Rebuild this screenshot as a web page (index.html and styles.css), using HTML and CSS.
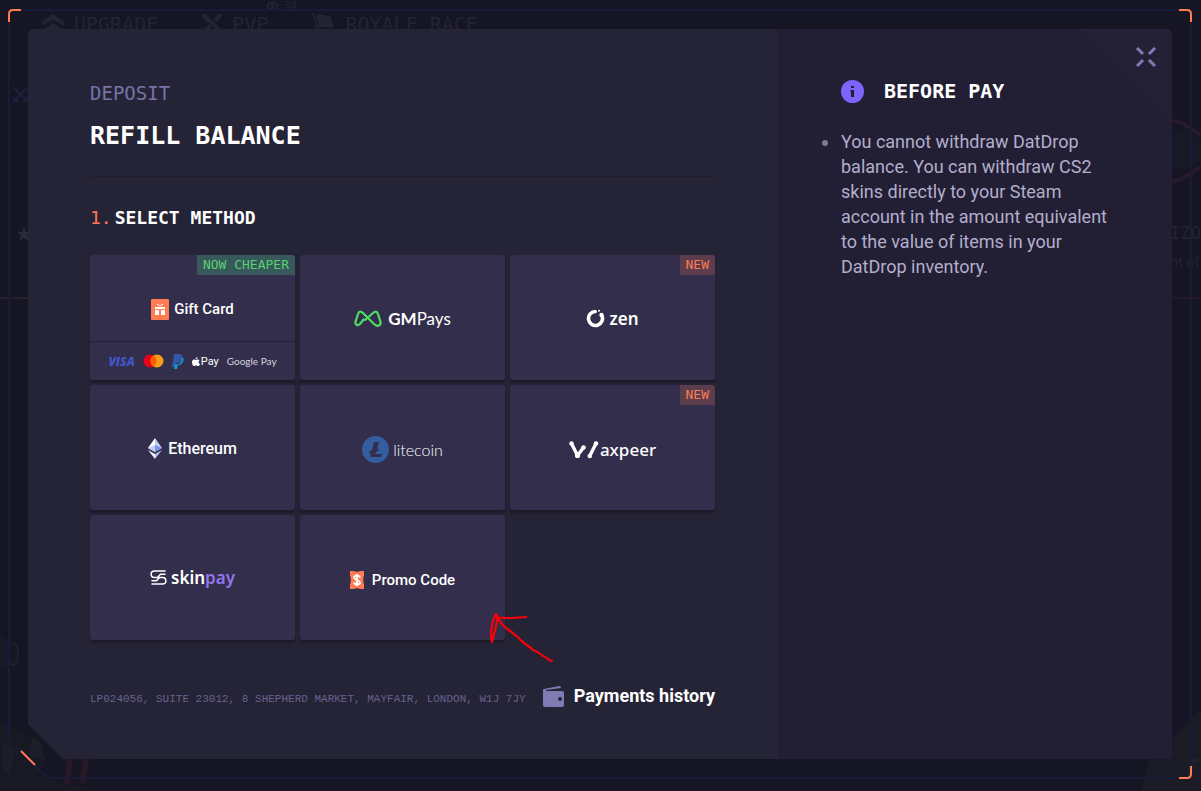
FILE: index.html
```html
<!DOCTYPE html>
<html lang="en">
<head>
<meta charset="utf-8">
<meta name="viewport" content="width=device-width, initial-scale=1">
<title>Refill balance</title>
<link rel="stylesheet" href="styles.css">
</head>
<body>
<div class="backdrop" aria-hidden="true">
  <div class="backdrop-nav">
    <span class="backdrop-item"><svg width="22" height="22" viewBox="0 0 22 22"><path d="M0 8 11 1l11 7v5L11 7 0 13zM0 17l11-7 11 7v5l-11-6-11 6z" fill="currentColor"/></svg>UPGRADE</span>
    <span class="backdrop-item"><svg width="20" height="20" viewBox="0 0 20 20"><path d="M0 1h4l16 16-3 3L1 5zM20 1h-4l-5 5 3 3 5-4zM8 10l-6 6-1 4 4-2 6-5z" fill="currentColor"/></svg>PVP</span>
    <span class="backdrop-item"><svg width="23" height="22" viewBox="0 0 23 22"><path d="M0 0h2l6 22H6zM4 2c6-3 9 3 14 0l4 12c-6 2-10-2-15 1z" fill="currentColor"/></svg>ROYALE RACE</span>
  </div>
  <span class="backdrop-views"><svg width="13" height="10" viewBox="0 0 13 10"><path d="M1 5c3-5 8-5 11 0-3 5-8 5-11 0z" fill="none" stroke="currentColor" stroke-width="2"/><circle cx="6.500" cy="5" r="2" fill="currentColor"/></svg>34</span>
  <svg class="backdrop-left" width="30" height="230" viewBox="0 0 30 230">
    <path d="M13 8l15 15M28 8 13 23M13 18l5 5M28 18l-5 5" stroke="#1b2140" stroke-width="2" fill="none"/>
    <path d="m24 148 2 5h5l-4 3 2 6-5-3-5 3 2-6-4-3h5z" fill="#292a3b"/>
    <path d="M0 219h30" stroke="#24212b" stroke-width="2"/>
  </svg>
  <svg class="backdrop-right" width="40" height="190" viewBox="0 0 40 190">
    <path d="M4 14c7-5 11-5 18-1l18 11M4 66c7 5 11 5 18 1l18-11" stroke="#281a2e" stroke-width="4" fill="none"/>
    <path d="M6 22l16-4 18 11v22L20 60 6 54z" fill="#171a24"/>
    <path d="M6 187h34" stroke="#24182b" stroke-width="2"/>
  </svg>
  <span class="backdrop-name">BIZO</span>
  <span class="backdrop-note">nt of</span>
  <svg class="backdrop-soldier" width="100" height="160" viewBox="0 0 100 160">
    <ellipse cx="13" cy="23" rx="5" ry="11" fill="#171724" stroke="#20202c" stroke-width="2"/>
    <path d="M0 4 8 12v26l-8-2z" fill="#1a1a27"/>
    <path d="M0 88l15 10 20 12 10 20-8 14 35 10 20 3v6H0z" fill="#191924"/>
    <path d="M32 106l8 4 6 20-16-5zM3 112l12 5-5 27-8-8z" fill="#1e1e29"/>
    <path d="m70 127-3 26M86 127l-4 26" stroke="#281724" stroke-width="6"/>
  </svg>
  <svg class="backdrop-helmet" width="60" height="100" viewBox="0 0 60 100"><path d="M0 100c3-20 8-35 18-45 10-8 22-12 28-24 4-7 9-10 14-11v80z" fill="#1b1b26"/><path d="M60 69c-8-1-12 4-12 13" fill="none" stroke="#20222c" stroke-width="3"/></svg>
</div>

<div class="overlay">
  <div class="frame" aria-hidden="true"></div>
  <svg class="corner corner-tl" width="13" height="13" viewBox="0 0 13 13"><path d="M1 13V5q0-4 4-4h8"/></svg>
  <svg class="corner corner-tr" width="13" height="13" viewBox="0 0 13 13"><path d="M0 1h8q4 0 4 4v8"/></svg>
  <svg class="corner corner-br" width="13" height="13" viewBox="0 0 13 13"><path d="M12 0v8q0 4-4 4H0"/></svg>
  <svg class="corner corner-bl" width="46" height="46" viewBox="0 0 46 46"><path class="corner-line" d="M1 0v3q0 4 3 7l30 30q5 5 11 5"/><path d="m13 18 14 14"/></svg>

  <main class="modal" role="dialog" aria-labelledby="title">
    <section class="deposit">
      <p class="eyebrow">DEPOSIT</p>
      <h1 id="title">REFILL BALANCE</h1>
      <hr>
      <h2 class="step"><span class="step-number">1.</span>SELECT METHOD</h2>
      <div class="methods">
        <button class="method method-split" type="button">
          <span class="badge badge-green">NOW CHEAPER</span>
          <span class="brand brand-gift">
            <svg width="18" height="21" viewBox="0 0 18 21"><rect width="18" height="21" rx="1" fill="#ff7b52"/><path d="M4 8h10v2H4zM4 11h4v5H4zM10 11h4v5h-4z" fill="#fff"/><path d="m6 5 3 2 3-2" fill="none" stroke="#fff"/></svg>
            Gift Card
          </span>
          <span class="cards">
            <span class="visa">VISA</span>
            <svg width="21" height="14" viewBox="0 0 21 14"><circle cx="7" cy="7" r="6.500" fill="#eb001b"/><circle cx="14" cy="7" r="6.500" fill="#f79e1b"/><path d="M10.500 1.500a6.500 6.500 0 0 1 0 11 6.500 6.500 0 0 1 0-11z" fill="#ff5f00"/></svg>
            <svg width="12" height="15" viewBox="0 0 12 15"><path d="M2 0h5c3 0 4 2 3 5-1 3-3 4-6 4l-1 4H0z" fill="#3657a7"/><path d="M10 3c2 1 2 3 1 5-1 2-3 3-5 3l-1 4H2l1-5c4 1 7-1 7-7z" fill="#1597d6"/></svg>
            <span class="apple"><svg width="8" height="9" viewBox="0 0 16 18"><path d="M11 0c0 3-1 4-4 5 0-3 2-5 4-5zM8 6c1 0 2-1 4-1 1 0 3 1 3 2-3 2-2 6 1 7-1 3-2 4-4 4-1 0-2-1-4-1s-2 1-4 1C1 17 0 13 0 10s2-5 4-5c2 0 3 1 4 1z" fill="#fff"/></svg>Pay</span>
            <span class="google">Google Pay</span>
          </span>
        </button>
        <button class="method" type="button">
          <span class="brand brand-gmpays">
            <svg width="28" height="17" viewBox="0 0 28 17"><path d="M9.500 9.500 6 14c-2 2-5 1-4.500-2L4 4c1-3 3-3 5-1l11 11c3 3 7 2 6.500-2L24 4c-1-3-3-3-5-1l-8 7" fill="none" stroke="#4ddb60" stroke-width="2.300" stroke-linecap="round" stroke-linejoin="round"/></svg>
            <span><b>GM</b>Pays</span>
          </span>
        </button>
        <button class="method" type="button">
          <span class="badge">NEW</span>
          <span class="brand brand-zen">
            <svg width="19" height="19" viewBox="0 0 19 19"><path d="M9.500 2.500a7 7 0 1 0 6.300 4" fill="none" stroke="#fff" stroke-width="3.600"/><circle cx="9.500" cy="2.500" r="1.500" fill="#fff"/><circle cx="15.500" cy="6" r="2.200" fill="#fff"/><circle cx="13" cy="1.800" r="1" fill="#fff"/></svg>
            zen
          </span>
        </button>
        <button class="method" type="button">
          <span class="brand brand-eth">
            <svg width="14" height="21" viewBox="0 0 14 21"><path d="M7 0v14l-7-4z" fill="#fff"/><path d="m7 0 7 10-7 4z" fill="#c3cef7"/><path d="m7 7 7 3-7 4z" fill="#7d92e8"/><path d="m0 10 7-3v7z" fill="#c5cdf2"/><path d="m0 12 7 4v5z" fill="#f1f3ff"/><path d="m14 12-7 4v5z" fill="#b3bfee"/></svg>
            Ethereum
          </span>
        </button>
        <button class="method" type="button">
          <span class="brand brand-litecoin">
            <svg width="27" height="27" viewBox="0 0 27 27"><circle cx="13.500" cy="13.500" r="13.500" fill="#345d9d"/><path d="M12 6h5l-2 7 2-1-1 3-2 1-1 2h7l-1 3H8l1-4-2 1 1-3 2-1z" fill="#322e4b"/></svg>
            litecoin
          </span>
        </button>
        <button class="method" type="button">
          <span class="badge">NEW</span>
          <span class="brand brand-waxpeer">
            <svg width="30" height="18" viewBox="0 0 30 18"><path d="m2.500 2.500 6 12 6-8M27 2.500l-6 12" fill="none" stroke="#fff" stroke-width="3.400" stroke-linecap="round" stroke-linejoin="round"/><circle cx="2.500" cy="2.500" r="2.200" fill="#fff"/><circle cx="14.500" cy="6.500" r="2.300" fill="#fff"/><circle cx="27" cy="2.500" r="2.300" fill="#fff"/><circle cx="8.500" cy="14.500" r="2.600" fill="#fff"/><circle cx="20.800" cy="15" r="2.300" fill="#fff"/></svg>
            axpeer
          </span>
        </button>
        <button class="method" type="button">
          <span class="brand brand-skinpay">
            <svg width="17" height="15" viewBox="0 0 17 15"><path d="M15 1H4.500C0 1 0 7.500 4.500 7.500H9M2 14h10.500c4.500 0 4.500-6.500 0-6.500H8M15 4.200h-4.500L7.500 7.500M2 10.800h4.500l3-3.300" fill="none" stroke="#fff" stroke-width="1.500" stroke-linecap="round" stroke-linejoin="round"/></svg>
            <span>skin<span class="pay">pay</span></span>
          </span>
        </button>
        <button class="method" type="button">
          <span class="brand brand-promo">
            <svg width="14" height="18" viewBox="0 0 14 18"><path d="M0 0h4c1 1 5 1 6 0h4v5c-1 1-1 7 0 8v5h-4c-1-1-5-1-6 0H0v-5c1-1 1-7 0-8z" fill="#ff7b52"/><path d="M10 6.500C9.500 4 4 4 4 6.500S10 9 10 11.500 4.500 14 4 11.500M7 3v12" fill="none" stroke="#fff" stroke-width="1.800"/></svg>
            Promo Code
          </span>
        </button>
      </div>
      <footer class="deposit-footer">
        <address>LP024056, SUITE 23012, 8 SHEPHERD MARKET, MAYFAIR, LONDON, W1J 7JY</address>
        <a class="history" href="#history">
          <svg width="21" height="21" viewBox="0 0 21 21"><path d="M0 4q0-1 1-1l15-3q2 0 2 2L3 4v1h16q2 0 2 2v12q0 2-2 2H2q-2 0-2-2z" fill="#7f7bb3"/><path d="M3 4h15v1H3z" fill="#252336"/><circle cx="17" cy="13" r="2" fill="#252336"/></svg>
          Payments history
        </a>
      </footer>
    </section>
    <aside class="info">
      <button class="close" type="button" aria-label="Close"><svg width="20" height="20" viewBox="0 0 20 20"><path d="m1 1 6 6M19 1l-6 6M1 19l6-6M19 19l-6-6" stroke="#7f7bb3" stroke-width="3"/></svg></button>
      <h2 class="info-title"><svg width="23" height="23" viewBox="0 0 23 23"><circle cx="11.500" cy="11.500" r="11.500" fill="#7e64ff"/><path d="M10 6h3v2h-3zM9.500 10H13v7h-3v-5h-.5z" fill="#221f35"/></svg>BEFORE PAY</h2>
      <ul>
        <li>You cannot withdraw DatDrop balance. You can withdraw CS2 skins directly to your Steam account in the amount equivalent to the value of items in your DatDrop inventory.</li>
      </ul>
    </aside>
  </main>
  <svg class="arrow" width="68" height="54" viewBox="0 0 68 54" aria-hidden="true"><path d="M64 51c-3 0-5-4-9-5-4-3-6-5-10-6-3-4-7-4-11-9-2 1-2-4-6-5-4-5-9-6-12-10-3-2-3-5-8-9 5 1 10 1 16 1l14-1M8 4C4 10 3 17 3 28l1 4C6 22 10 14 9 5" fill="none" stroke="#fb0007" stroke-width="2.200" stroke-linecap="round" stroke-linejoin="round"/></svg>
</div>
</body>
</html>
```
FILE: styles.css
```css
* {
  box-sizing: border-box;
}

body {
  margin: 0;
  background: #151524;
  color: #fff;
  font-family: Roboto, "Liberation Sans", sans-serif;
}

h1, h2, p, ul {
  margin: 0;
  padding: 0;
}

button {
  padding: 0;
  border: 0;
  color: inherit;
  font: inherit;
  cursor: pointer;
}

svg {
  flex: none;
}

h1, h2, .eyebrow, .badge, .backdrop {
  font-family: "DejaVu Sans Mono", monospace;
}

/* Dimmed page under the dialog */
.backdrop {
  position: absolute;
  inset: 0;
  overflow: hidden;
  color: #232333;
}

.backdrop-nav {
  display: flex;
  gap: 44px;
  padding: 13px 42px;
  font-size: 20px;
  line-height: 22px;
}

.backdrop-item {
  display: flex;
  gap: 10px;
}

.backdrop-views {
  position: absolute;
  left: 266px;
  top: -1px;
  display: flex;
  align-items: center;
  gap: 4px;
  font-size: 12px;
}

.backdrop-left {
  position: absolute;
  left: 0;
  top: 79px;
}

.backdrop-right {
  position: absolute;
  right: 0;
  top: 111px;
}

.backdrop-name,
.backdrop-note {
  position: absolute;
  right: 0;
  top: 223px;
  font-size: 17px;
}

.backdrop-note {
  right: 2px;
  top: 254px;
  font-family: Roboto, sans-serif;
  font-size: 14px;
}

.backdrop-soldier {
  position: absolute;
  left: 0;
  bottom: 0;
}

.backdrop-helmet {
  position: absolute;
  right: 0;
  bottom: 0;
}

/* Overlay and its frame */
.overlay {
  position: relative;
  display: flex;
  min-height: 100vh;
  padding: 29px 29px 32px 28px;
}

.frame {
  position: absolute;
  inset: 9px 9px 12px 8px;
  border: 2px solid #1b1a38;
  border-radius: 5px;
  clip-path: polygon(0 0, 100% 0, 100% 100%, 44px 100%, 0 calc(100% - 44px));
}

.corner {
  position: absolute;
  fill: none;
  stroke: #ff7b52;
  stroke-width: 2;
}

.corner-tl { left: 8px; top: 9px; }
.corner-tr { right: 9px; top: 9px; }
.corner-br { right: 9px; bottom: 12px; }
.corner-bl { left: 8px; bottom: 12px; }

.corner-line {
  stroke: #1b1a38;
}

/* Dialog */
.modal {
  position: relative;
  display: grid;
  grid-template-columns: 750fr 394fr;
  flex: 1;
  border-radius: 5px;
  background: #252336;
  clip-path: polygon(0 0, 100% 0, 100% 100%, 35px 100%, 0 calc(100% - 35px));
  overflow: hidden;
}

.deposit {
  padding: 52px 63px 49px 62px;
}

.eyebrow {
  color: #7773a8;
  font-size: 19px;
  line-height: 24px;
}

h1 {
  margin-top: 15px;
  font-size: 25px;
  line-height: 32px;
}

hr {
  height: 1px;
  margin: 24px 0 0;
  border: 0;
  background: #1f1d2e;
}

.step {
  display: flex;
  gap: 3px;
  margin-top: 29px;
  font-size: 18px;
  line-height: 24px;
}

.step-number {
  color: #ff7b52;
  font-weight: 400;
}

.methods {
  display: grid;
  grid-template-columns: repeat(3, 1fr);
  grid-auto-rows: 125px;
  gap: 5px;
  margin-top: 25px;
}

.method {
  position: relative;
  display: flex;
  align-items: center;
  justify-content: center;
  border-radius: 3px;
  background: #322e4b;
  box-shadow: 0 3px 2px #1d1b2a;
}

.method-split {
  flex-direction: column;
  align-items: stretch;
}

.badge {
  position: absolute;
  top: 0;
  right: 0;
  padding: 0 6px;
  border-top-right-radius: 3px;
  background: #5b3d4c;
  color: #ff7b52;
  font-size: 13px;
  line-height: 20px;
}

.badge-green {
  background: #37595b;
  color: #58d070;
}

.brand {
  display: flex;
  align-items: center;
  justify-content: center;
  gap: 6px;
  padding-top: 2px;
  font-size: 15px;
  font-weight: 500;
  line-height: 20px;
}

.brand-gift {
  flex: 1;
  gap: 5px;
  padding-top: 22px;
}

.brand-gmpays {
  font-family: Lato, sans-serif;
  font-size: 17px;
  font-weight: 400;
}

.brand-zen {
  gap: 4px;
  font-family: "Noto Sans", sans-serif;
  font-size: 17px;
  font-weight: 600;
}

.brand-eth {
  font-size: 16px;
}

.brand-litecoin {
  gap: 4px;
  padding-top: 4px;
  font-family: Lato, sans-serif;
  font-size: 16px;
  font-weight: 300;
}

.brand-waxpeer {
  gap: 1px;
  padding-top: 4px;
  font-family: "Noto Sans", sans-serif;
  font-size: 17px;
}

.brand-skinpay {
  gap: 4px;
  padding-top: 0;
  font-family: "Noto Sans", sans-serif;
  font-size: 17px;
  font-weight: 600;
}

.brand-promo {
  gap: 8px;
  padding-top: 4px;
}

.pay {
  color: #9375ed;
}

.cards {
  display: flex;
  align-items: center;
  justify-content: center;
  gap: 8px;
  height: 39px;
  border-top: 1px solid #232133;
}

.visa {
  color: #4255c9;
  font-family: "Open Sans", sans-serif;
  font-size: 12px;
  font-style: italic;
  font-weight: 800;
}

.apple {
  display: flex;
  align-items: center;
  gap: 1px;
  font-size: 11px;
}

.google {
  color: #d6d5df;
  font-family: Lato, sans-serif;
  font-size: 10px;
}

.deposit-footer {
  display: flex;
  align-items: center;
  justify-content: space-between;
  margin-top: 42px;
}

address {
  padding-top: 5px;
  color: #67628e;
  font-family: "Liberation Mono", monospace;
  font-size: 11px;
  font-style: normal;
  white-space: nowrap;
}

.history {
  display: flex;
  align-items: center;
  gap: 10px;
  color: #fff;
  font-size: 18px;
  font-weight: 700;
  line-height: 28px;
  text-decoration: none;
  white-space: nowrap;
}

.info {
  position: relative;
  padding: 49px 50px 49px 63px;
  background: linear-gradient(225deg, #242137 66px, #221f35 67px);
}

.close {
  position: absolute;
  top: 18px;
  right: 16px;
  display: flex;
  background: none;
}

.info-title {
  display: flex;
  align-items: center;
  gap: 20px;
  font-size: 20px;
  line-height: 26px;
}

.info ul {
  margin-top: 25px;
  list-style: none;
}

.info li {
  position: relative;
  color: #b3aecb;
  font-size: 18px;
  line-height: 25px;
}

.info li::before {
  content: "";
  position: absolute;
  left: -19px;
  top: 11px;
  width: 6px;
  height: 6px;
  border-radius: 50%;
  background: #7e7a93;
}

.arrow {
  position: absolute;
  left: 488px;
  top: 610px;
}
```
